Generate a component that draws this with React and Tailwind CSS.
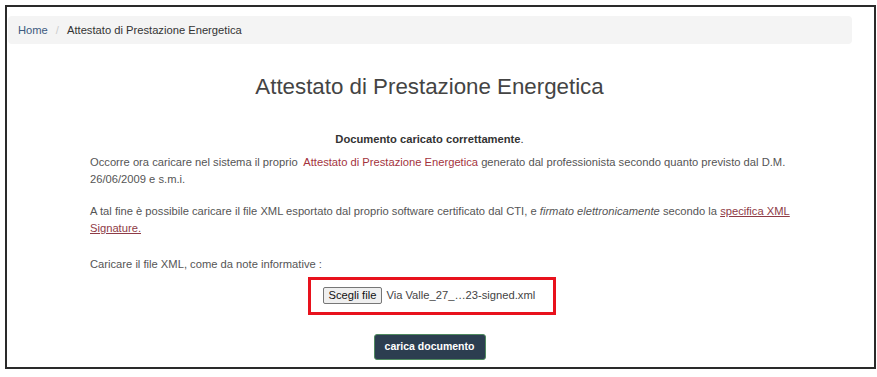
export default function App() {
    return (
        <div className="w-[877px] h-[377px] bg-white pt-[5px] pl-[5px] font-['Liberation_Sans',Arial,sans-serif]">
            <div className="w-[871px] h-[364px] border-2 border-[#2a2a2a] flex flex-col">
                <div className="ml-px mt-[9px] w-[844px] h-[28px] bg-[#f4f4f4] rounded-[4px] flex items-center pl-[10px] text-[11.2px]">
                    <a href="#" className="text-[#3d5a80]">Home</a>
                    <span className="text-[#cccccc] px-[8px]">/</span>
                    <span className="text-[#333333]">Attestato di Prestazione Energetica</span>
                </div>

                <div className="mr-[22px]">
                    <h2 className="mt-[30px] text-center text-[22.3px] leading-[26px] text-[#444444]">
                        Attestato di Prestazione Energetica
                    </h2>

                    <div className="mt-[31px] text-center text-[11.2px] text-[#333333]">
                        <strong>Documento caricato correttamente</strong>.
                    </div>
                </div>

                <div className="pl-[83px] pr-[70px] text-[11.2px] leading-[17px] text-[#555555]">
                    <p className="mt-[6px]">
                        Occorre ora caricare nel sistema il proprio&nbsp; <span className="text-[#a3333d]">Attestato di Prestazione Energetica</span> generato dal professionista secondo quanto previsto dal D.M. 26/06/2009 e s.m.i.
                    </p>
                    <p className="mt-[15px]">
                        A tal fine è possibile caricare il file XML esportato dal proprio software certificato dal CTI, e <em>firmato elettronicamente</em> secondo la <a href="#" className="text-[#8e3b46] underline">specifica XML Signature.</a>
                    </p>
                    <p className="mt-[19px]">Caricare il file XML, come da note informative :</p>
                </div>

                <div className="mr-[22px]">
                    <div className="mt-[4px] flex justify-center">
                        <div className="ml-[4px] w-[248px] h-[38px] border-[3px] border-[#e8121d] flex items-center pl-[12px] text-[11.2px]">
                            <span className="h-[17px] px-[5px] flex items-center bg-[#efefef] border border-[#767676] rounded-[2px] text-[#111111]">Scegli file</span>
                            <span className="ml-[4px] text-[#444444]">Via Valle_27_…23-signed.xml</span>
                        </div>
                    </div>

                    <div className="mt-[19px] flex justify-center">
                        <button className="w-[112px] h-[26px] bg-[#2c3e50] text-white text-[10.5px] font-bold rounded-[3px] border border-[#4f8a5f]">
                            carica documento
                        </button>
                    </div>
                </div>
            </div>
        </div>
    );
}
